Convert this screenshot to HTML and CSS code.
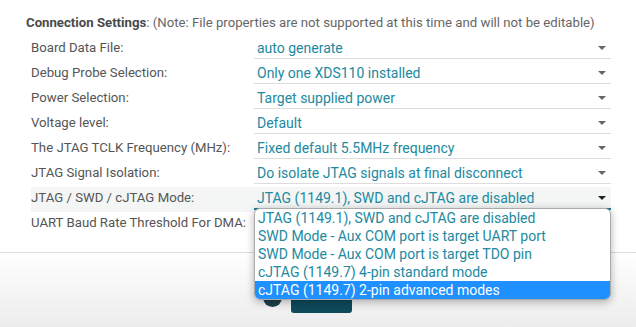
FILE: index.html
```html
<!DOCTYPE html>
<html lang="en">
<head>
  <meta charset="UTF-8" />
  <title>Connection Settings</title>
  <link rel="stylesheet" href="styles.css">
</head>
<body>
  <div class="settings">
    <div class="heading"><b>Connection Settings</b>: (Note: File properties are not supported at this time and will not be editable)</div>

    <div class="row">
      <div class="label">Board Data File:</div>
      <div class="select">auto generate<span class="arrow"></span></div>
    </div>
    <div class="row">
      <div class="label">Debug Probe Selection:</div>
      <div class="select">Only one XDS110 installed<span class="arrow"></span></div>
    </div>
    <div class="row">
      <div class="label">Power Selection:</div>
      <div class="select">Target supplied power<span class="arrow"></span></div>
    </div>
    <div class="row">
      <div class="label">Voltage level:</div>
      <div class="select">Default<span class="arrow"></span></div>
    </div>
    <div class="row">
      <div class="label">The JTAG TCLK Frequency (MHz):</div>
      <div class="select">Fixed default 5.5MHz frequency<span class="arrow"></span></div>
    </div>
    <div class="row">
      <div class="label">JTAG Signal Isolation:</div>
      <div class="select">Do isolate JTAG signals at final disconnect<span class="arrow"></span></div>
    </div>
    <div class="row active">
      <div class="label">JTAG / SWD / cJTAG Mode:</div>
      <div class="select">JTAG (1149.1), SWD and cJTAG are disabled<span class="arrow"></span>
        <ul class="options">
          <li>JTAG (1149.1), SWD and cJTAG are disabled</li>
          <li>SWD Mode - Aux COM port is target UART port</li>
          <li>SWD Mode - Aux COM port is target TDO pin</li>
          <li>cJTAG (1149.7) 4-pin standard mode</li>
          <li class="selected">cJTAG (1149.7) 2-pin advanced modes</li>
        </ul>
      </div>
    </div>
    <div class="row">
      <div class="label">UART Baud Rate Threshold For DMA:</div>
      <div class="select"><span class="arrow"></span></div>
    </div>
  </div>

  <footer class="actions">
    <span class="help"></span>
    <button class="save" aria-label="Save"></button>
  </footer>
</body>
</html>
```

FILE: styles.css
```css
body {
  margin: 0;
  font-family: Roboto, "Liberation Sans", sans-serif;
  background: #fff;
  color: #555;
}

.settings {
  padding: 15px 0 0 26px;
}

.heading {
  font-size: 13.2px;
  line-height: 16px;
  color: #666;
  margin-bottom: 6px;
}

.heading b {
  color: #4a4a4a;
}

.row {
  display: grid;
  grid-template-columns: 223px 357px;
  height: 25px;
  margin-left: 5px;
  width: 580px;
  font-size: 13.2px;
}

.row.active {
  background: #f4f6f6;
}

.label {
  line-height: 22px;
}

.select {
  position: relative;
  height: 21px;
  line-height: 22px;
  padding-left: 3px;
  font-size: 14px;
  color: #2289a0;
  border-bottom: 1px solid #ddd;
}

.arrow {
  position: absolute;
  right: 5px;
  top: 9px;
  border-left: 4px solid transparent;
  border-right: 4px solid transparent;
  border-top: 4px solid #666;
}

.row.active .select {
  border-bottom: 2px solid #18808f;
}

.row.active .arrow {
  border-top-color: #222;
}

.options {
  position: absolute;
  left: 0;
  top: 100%;
  width: 355px;
  margin: 0;
  padding: 0;
  list-style: none;
  background: #fff;
  border: 1px solid #aaa;
  border-radius: 6px;
  box-shadow: 0 2px 8px rgba(0, 0, 0, 0.3);
  overflow: hidden;
  z-index: 2;
}

.options li {
  height: 18px;
  line-height: 18px;
  padding-left: 3px;
  color: #2289a0;
}

.options li.selected {
  background: #1e90ff;
  color: #fff;
}

.actions {
  margin-top: 15px;
  height: 74px;
  border-top: 1px solid #ddd;
  background: linear-gradient(#fff, #ececec);
  display: flex;
  align-items: flex-start;
  padding-left: 263px;
  gap: 9px;
}

.help {
  margin-top: 35px;
  width: 19px;
  height: 19px;
  border-radius: 50%;
  background: #1d3f48;
}

.save {
  margin-top: 32px;
  width: 61px;
  height: 28px;
  border: none;
  border-radius: 3px;
  background: #0e4a5a;
}
```
